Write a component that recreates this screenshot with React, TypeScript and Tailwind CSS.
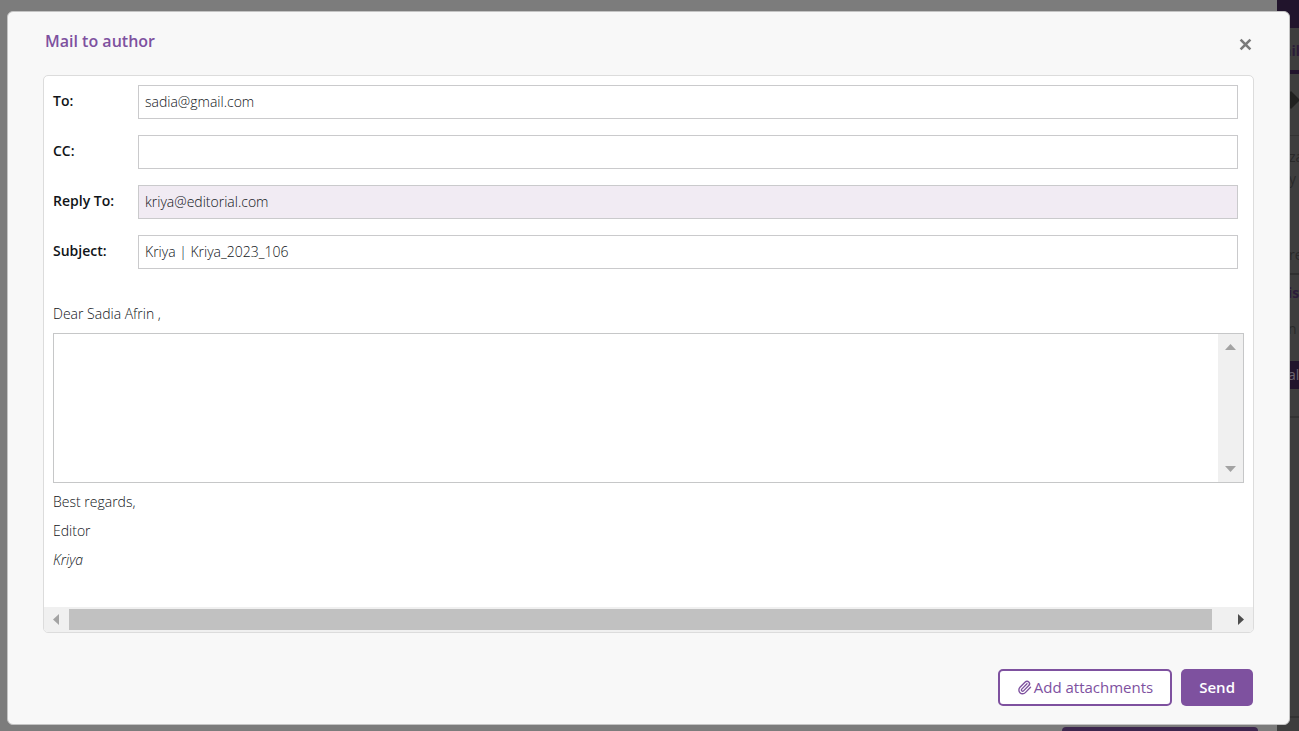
import { useState } from "react";
import { Paperclip } from "lucide-react";

const FIELDS = [
  { id: "to", label: "To:", value: "sadia@gmail.com", readOnly: false },
  { id: "cc", label: "CC:", value: "", readOnly: false },
  { id: "replyTo", label: "Reply To:", value: "kriya@editorial.com", readOnly: true },
  { id: "subject", label: "Subject:", value: "Kriya | Kriya_2023_106", readOnly: false },
];

export default function App() {
  return (
    <div className="relative flex min-h-screen flex-col overflow-hidden pt-[11px] pr-[9px] pb-[6px] pl-[7px] font-['Open_Sans',sans-serif] text-[#101418]">
      <Backdrop />
      <MailDialog />
    </div>
  );
}

function MailDialog() {
  const [body, setBody] = useState("");

  return (
    <div
      role="dialog"
      aria-labelledby="mail-title"
      className="relative flex flex-1 flex-col rounded-md border border-[#c4c4c4] bg-[#f8f8f8] px-[35px] pb-[18px]"
    >
      <header className="flex h-[63px] items-start justify-between">
        <h1 id="mail-title" className="pt-[17px] pl-0.5 text-base font-semibold text-[#7e519f]">
          Mail to author
        </h1>
        <button type="button" aria-label="Close" className="mt-[25px] mr-px p-px">
          <svg viewBox="0 0 13 13" className="size-[13px]" aria-hidden>
            <path d="M1.6 1.6 11.4 11.4M11.4 1.6 1.6 11.4" stroke="#7b7b7b" strokeWidth="2.6" />
          </svg>
        </button>
      </header>

      <section className="flex flex-1 flex-col overflow-hidden rounded-[5px] border border-[#dcdcdc] bg-white">
        <div className="flex-1 px-[9px] pt-[9px]">
          <div className="flex flex-col gap-4 pr-1.5">
            {FIELDS.map((f) => (
              <div key={f.id} className="flex h-[34px] items-start">
                <label htmlFor={f.id} className="w-[85px] shrink-0 pt-1.5 text-sm font-semibold">
                  {f.label}
                </label>
                <input
                  id={f.id}
                  type="text"
                  defaultValue={f.value}
                  readOnly={f.readOnly}
                  className="h-full min-w-0 flex-1 border border-[#cacacc] bg-white px-1.5 pb-0.5 text-sm font-light outline-none read-only:bg-[#f1ebf3]"
                />
              </div>
            ))}
          </div>

          <p className="mt-[35px] text-sm font-light">Dear Sadia Afrin ,</p>

          <div className="mt-[9px] flex h-[150px] border border-[#c6c7c8]">
            <textarea
              aria-label="Message"
              value={body}
              onChange={(e) => setBody(e.target.value)}
              className="min-w-0 flex-1 resize-none p-1.5 text-sm font-light outline-none"
            />
            <div className="flex w-[25px] flex-col items-center justify-between bg-[#f0f0f0] py-2.5">
              <svg viewBox="0 0 11 6" className="h-[6px] w-[11px]" aria-hidden>
                <path d="M0 6 5.5 0 11 6Z" fill="#a3a3a3" />
              </svg>
              <svg viewBox="0 0 11 6" className="h-[6px] w-[11px]" aria-hidden>
                <path d="M0 0H11L5.5 6Z" fill="#a3a3a3" />
              </svg>
            </div>
          </div>

          <div className="flex flex-col gap-[9px] pt-[9px] pb-6 text-sm font-light">
            <p>Best regards,</p>
            <p>Editor</p>
            <p className="italic">Kriya</p>
          </div>
        </div>

        {/* Horizontal scroll track */}
        <div className="flex h-[25px] items-center bg-[#f0f0f0]">
          <div className="flex w-[25px] pl-[9px]">
            <svg viewBox="0 0 6 11" className="h-[11px] w-[6px]" aria-hidden>
              <path d="M6 0V11L0 5.5Z" fill="#a3a3a3" />
            </svg>
          </div>
          <div className="h-[21px] flex-1 bg-[#c1c1c1]" />
          <div className="flex w-[41px] justify-end pr-[9px]">
            <svg viewBox="0 0 6 11" className="h-[11px] w-[6px]" aria-hidden>
              <path d="M0 0V11L6 5.5Z" fill="#4d4d4d" />
            </svg>
          </div>
        </div>
      </section>

      <footer className="flex justify-end gap-[9px] pt-9 pr-px text-[15px]">
        <button
          type="button"
          className="flex h-[37px] items-center gap-0.5 rounded-[5px] border-2 border-[#7e519f] bg-white px-[17px] text-[#7e519f]"
        >
          <Paperclip className="size-[15px]" strokeWidth={2.2} aria-hidden />
          Add attachments
        </button>
        <button
          type="button"
          className="h-[37px] rounded-[5px] bg-[#7e519f] px-[18px] font-semibold text-white"
        >
          Send
        </button>
      </footer>
    </div>
  );
}

// Dimmed page under the dialog
function Backdrop() {
  return (
    <div className="absolute inset-0 flex bg-[#7c7c7c]" aria-hidden>
      <div className="flex flex-1 items-end justify-end pr-[19px]">
        <div className="h-1 w-[196px] rounded-t-sm bg-[#3c264d]" />
      </div>
      <div className="flex w-[22px] flex-col overflow-hidden bg-[#3e3e3e] text-sm whitespace-nowrap text-[#292929]">
        <div className="h-7 bg-[#21142c]" />
        <div className="flex h-[46px] items-center border-b-4 border-[#21142c] pt-1 pl-1.5 font-bold text-[#2b1c39]">
          ail
        </div>
        <div className="flex h-[62px] items-start border-b border-[#333333] pt-[17px] pl-[5px]">
          <svg viewBox="0 0 18 18" className="size-[18px] shrink-0" aria-hidden>
            <path d="M9 0 18 9 9 18 0 9Z" fill="#202020" />
          </svg>
        </div>
        <div className="flex h-[139px] flex-col border-b-2 border-[#303030] pt-[11px] pl-3">
          <span>za</span>
          <span className="pt-0.5">y</span>
          <span className="mt-auto pb-2">re</span>
        </div>
        <div className="flex h-[86px] flex-col pt-2 pl-[11px]">
          <span className="font-bold text-[#2b1c39]">is</span>
          <span className="pt-4">n</span>
        </div>
        <div className="flex h-7 items-center bg-[#21142c] pl-[11px] text-[#6c6570]">al</div>
        <div className="h-[29px] border-b-2 border-[#333333]" />
        <div className="h-[300px] border-b-2 border-[#333333]" />
      </div>
    </div>
  );
}
